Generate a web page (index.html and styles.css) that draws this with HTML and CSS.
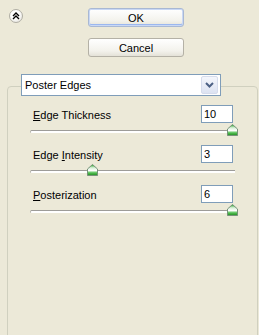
FILE: index.html
```html
<!DOCTYPE html>
<html lang="en">
<head>
    <meta charset="UTF-8">
    <title>Poster Edges</title>
    <link rel="stylesheet" href="styles.css">
</head>
<body>
    <div class="top">
        <button class="collapse" title="Collapse">
            <svg width="8" height="8" viewBox="0 0 8 8">
                <path d="M1 4 L4 1 L7 4 M1 7 L4 4 L7 7" fill="none" stroke="#000" stroke-width="1.4"/>
            </svg>
        </button>
        <div class="actions">
            <button class="btn btn-default">OK</button>
            <button class="btn">Cancel</button>
        </div>
    </div>

    <div class="group">
        <div class="combo">
            <span class="combo-text">Poster Edges</span>
            <span class="combo-arrow">
                <svg width="9" height="6" viewBox="0 0 9 6">
                    <path d="M1 1 L4.5 4.5 L8 1" fill="none" stroke="#4d6185" stroke-width="2"/>
                </svg>
            </span>
        </div>

        <div class="param">
            <div class="param-head">
                <label><u>E</u>dge Thickness</label>
                <input type="text" value="10">
            </div>
            <div class="slider">
                <div class="track"></div>
                <span class="thumb" style="left: 197px"></span>
            </div>
        </div>

        <div class="param">
            <div class="param-head">
                <label>Edge <u>I</u>ntensity</label>
                <input type="text" value="3">
            </div>
            <div class="slider">
                <div class="track"></div>
                <span class="thumb" style="left: 57px"></span>
            </div>
        </div>

        <div class="param">
            <div class="param-head">
                <label><u>P</u>osterization</label>
                <input type="text" value="6">
            </div>
            <div class="slider">
                <div class="track"></div>
                <span class="thumb" style="left: 197px"></span>
            </div>
        </div>
    </div>
</body>
</html>
```

FILE: styles.css
```css
body {
    font-family: 'Liberation Sans', Arial, sans-serif;
    font-size: 11px;
    background-color: #ece9d8;
    margin: 0;
    padding: 0;
    color: #000;
    overflow: hidden;
}
.top {
    display: flex;
    align-items: flex-start;
    padding: 8px 0 0 9px;
}
.collapse {
    width: 14px;
    height: 14px;
    margin-top: 1px;
    padding: 0;
    border: 1px solid #b0aea4;
    border-radius: 50%;
    background: radial-gradient(circle at 40% 35%, #ffffff 40%, #dcdad0 100%);
    display: flex;
    align-items: center;
    justify-content: center;
}
.actions {
    display: flex;
    flex-direction: column;
    gap: 11px;
    margin-left: 65px;
}
.btn {
    width: 96px;
    height: 19px;
    padding: 0;
    font-family: inherit;
    font-size: 11px;
    color: #000;
    border: 1px solid #b4b1a6;
    border-radius: 3px;
    background: linear-gradient(#ffffff, #f3f2ec 70%, #e4e2d8);
}
.btn-default {
    border-color: #a9b8d3;
    box-shadow: inset 0 0 0 1px #c9d8f5, inset 0 -1px 0 1px #9bb7ef;
}
.group {
    margin: 29px 0 0 7px;
    width: 249px;
    height: 400px;
    border: 1px solid #d0d0bf;
    border-radius: 4px;
}
.combo {
    display: flex;
    align-items: center;
    width: 198px;
    height: 20px;
    margin: -13px 0 0 13px;
    border: 1px solid #7f9db9;
    background-color: #fff;
}
.combo-text {
    flex: 1;
    padding-left: 3px;
}
.combo-arrow {
    width: 15px;
    height: 16px;
    margin-right: 2px;
    border: 1px solid #d6dcec;
    border-radius: 2px;
    background: linear-gradient(#f4f6fc, #dde3f2);
    display: flex;
    align-items: center;
    justify-content: center;
}
.param {
    margin-top: 9px;
}
.param-head {
    display: flex;
    justify-content: space-between;
    align-items: center;
    height: 18px;
    padding: 0 24px 0 25px;
}
.param-head label {
    padding-top: 1px;
}
.param-head input {
    width: 26px;
    height: 14px;
    margin: 0;
    padding: 1px 2px;
    border: 1px solid #7f9db9;
    font-family: inherit;
    font-size: 11px;
}
.slider {
    position: relative;
    width: 205px;
    height: 12px;
    margin: 1px 0 0 22px;
}
.track {
    position: absolute;
    left: 0;
    right: 0;
    top: 6px;
    height: 2px;
    border-top: 1px solid #9d9c99;
    border-left: 1px solid #b4b2aa;
    border-radius: 2px 0 0 2px;
    background-color: #fff;
}
.thumb {
    position: absolute;
    top: 0;
    width: 11px;
    height: 12px;
    background:
        url("data:image/svg+xml,%3Csvg xmlns='http://www.w3.org/2000/svg' width='11' height='12'%3E%3Cdefs%3E%3ClinearGradient id='g' x1='0' y1='0' x2='0' y2='1'%3E%3Cstop offset='0' stop-color='%2321a121'/%3E%3Cstop offset='0.3' stop-color='%23d8f0d8'/%3E%3Cstop offset='0.55' stop-color='%23ffffff'/%3E%3Cstop offset='0.75' stop-color='%2355c055'/%3E%3Cstop offset='1' stop-color='%23218d21'/%3E%3C/linearGradient%3E%3C/defs%3E%3Cpath d='M5.5 0.5 L10.5 5 L10.5 11.5 L0.5 11.5 L0.5 5 Z' fill='url(%23g)' stroke='%2377917a'/%3E%3C/svg%3E") no-repeat;
}
```
